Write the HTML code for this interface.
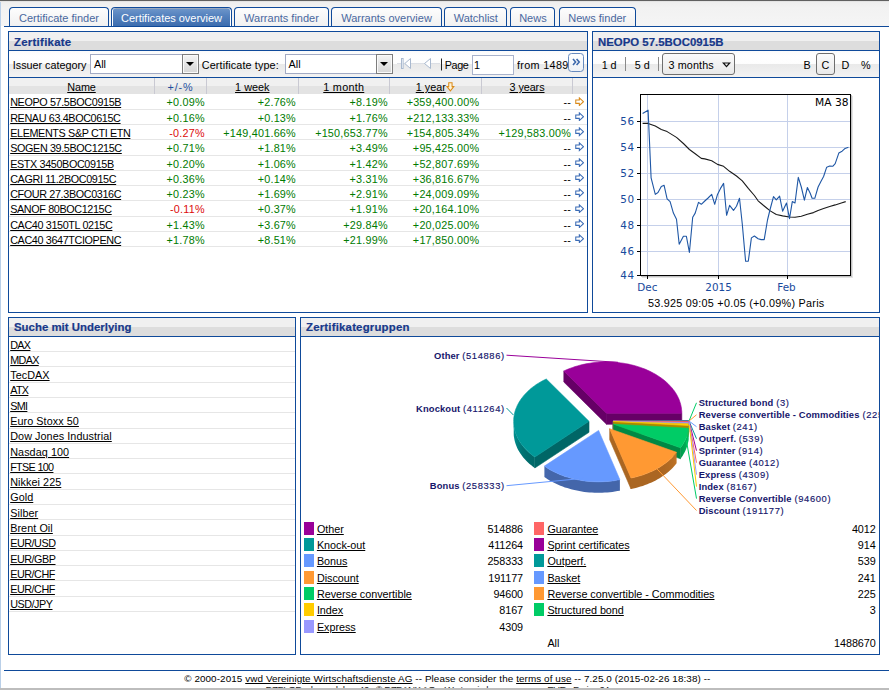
<!DOCTYPE html>
<html><head><meta charset="utf-8"><title>Certificates overview</title>
<style>
html,body{margin:0;padding:0;}
body{width:889px;height:690px;overflow:hidden;position:relative;background:#fff;font-family:"Liberation Sans",sans-serif;font-size:10.8px;color:#000;}
*{box-sizing:border-box;}
.abs{position:absolute;}
#topbg{position:absolute;left:0;top:0;width:889px;height:26px;background:linear-gradient(#606060 0,#606060 0.95px,#dadada 1px,#ededed 2px,#efefef 3px,#f2f2f2 8px,#f5f5f5 26px);}
#leftedge{position:absolute;left:0;top:2px;width:1px;height:688px;background:#b9cfe8;}
#tabline{position:absolute;left:4px;top:26px;width:885px;height:1px;background:#0f4a9a;}
.tab{position:absolute;top:7px;height:19px;border:1px solid #0f4a9a;border-bottom:none;border-radius:4px 4px 0 0;background:linear-gradient(#fdfdfd,#f1f1f1);color:#4a689f;font-size:11px;line-height:21px;text-align:center;white-space:nowrap;}
.tab.act{background:linear-gradient(#b0b4bb 0,#6a93c8 1.5px,#5683bf 40%,#3d6dae 100%);color:#fff;box-shadow:inset 1px 0 0 #fff, inset -1px 0 0 #fff;}
.panel{position:absolute;border:1px solid #0f4a9a;background:#fff;overflow:hidden;}
.ph{position:absolute;left:0;top:0;right:0;height:19px;border-bottom:1px solid #0f4a9a;background:linear-gradient(#f0f0f0 0,#f0f0f0 9px,#dddddd 9px,#dddddd 18px);color:#17388a;-webkit-text-stroke:0.2px #17388a;font-weight:bold;font-size:11.4px;line-height:20px;padding-left:5px;white-space:nowrap;}
a{color:#000;text-decoration:underline;}
.tb{position:absolute;left:0;right:0;top:19px;height:27px;border-bottom:1px solid #0f4a9a;background:linear-gradient(#fbfbfb 0,#fff 20%,#fdfdfd 48%,#e9e9e9 52%,#f3f3f3 100%);}
.lbl{position:absolute;white-space:nowrap;line-height:13px;}
.sel{position:absolute;border:1px solid #a3abc4;background:#fff;}
.sel span{position:absolute;left:3px;top:3px;line-height:13px;}
.ddb{position:absolute;right:-1px;top:-1px;bottom:-1px;width:16.8px;border:1px solid #7d7d7d;background:linear-gradient(#f4f4f4,#d6d6d6);box-shadow:inset 0 0 0 1px #fafafa;}
.ddb:after{content:"";position:absolute;left:3.1px;top:7px;border-left:4.3px solid transparent;border-right:4.3px solid transparent;border-top:4.4px solid #000;}
.th{position:absolute;left:0;right:0;top:46px;height:16px;background:linear-gradient(#f0f0f0 0,#f0f0f0 8.5px,#e3e3e3 8.5px,#e3e3e3 16px);}
.th div{position:absolute;top:0;height:16px;line-height:19px;text-align:center;white-space:nowrap;border-right:1px solid #c9c9d2;}
.row{position:absolute;left:0;right:0;border-bottom:1px solid #e6e6e6;white-space:nowrap;}
.row div{position:absolute;top:0;line-height:16.2px;}
.g{color:#007a00;}
.r{color:#dc0a0a;}
.num{text-align:right;}
.btn{position:absolute;border:1px solid #6e6e6e;border-radius:3px;background:linear-gradient(#fbfbfb,#e9e9e9);}
.sep{position:absolute;width:1px;background:#8a8a8a;}
.sw{position:absolute;width:10.1px;height:13.1px;}
.lg{position:absolute;white-space:nowrap;line-height:13px;}
</style></head><body>
<div id="topbg"></div><div id="leftedge"></div><div id="tabline"></div>
<div class="tab" style="left:9.0px;width:100.0px;"><span style="letter-spacing:-0.005px;">Certificate finder</span></div>
<div class="tab act" style="left:111.0px;width:121.0px;"><span style="letter-spacing:-0.022px;">Certificates overview</span></div>
<div class="tab" style="left:234.0px;width:95.0px;">Warrants finder</div>
<div class="tab" style="left:331.0px;width:111.0px;">Warrants overview</div>
<div class="tab" style="left:444.4px;width:62.8px;">Watchlist</div>
<div class="tab" style="left:510.4px;width:45.0px;">News</div>
<div class="tab" style="left:558.5px;width:77.5px;">News finder</div>
<div class="panel" id="p1" style="left:8px;top:31px;width:580px;height:282px;">
<div class="ph"><span style="letter-spacing:0.275px;">Zertifikate</span></div>
<div class="tb">
<div class="lbl" style="left:3.8px;top:7.5px;"><span style="letter-spacing:-0.015px;">Issuer category</span></div>
<div class="sel" style="left:81px;top:3px;width:108.6px;height:20px;"><span>All</span><div class="ddb"></div></div>
<div class="lbl" style="left:192.8px;top:7.5px;"><span style="letter-spacing:0.116px;">Certificate type:</span></div>
<div class="sel" style="left:275.6px;top:3px;width:108.4px;height:20px;"><span>All</span><div class="ddb"></div></div>
<svg class="abs" style="left:386px;top:2px" width="60" height="24" viewBox="0 0 60 24"><line x1="2" y1="10.5" x2="45" y2="10.5" stroke="#dcdfe5" stroke-width="1"/><g fill="#fff" stroke="#a9b9cf" stroke-width="1"><rect x="6.5" y="5.5" width="1.6" height="10" /><path d="M15.5 5.5 L9.8 10.5 L15.5 15.5 Z"/><path d="M35.5 5.5 L29.5 10.5 L35.5 15.5 Z"/></g><line x1="46.5" y1="5.5" x2="46.5" y2="17.5" stroke="#222" stroke-width="1"/></svg>
<div class="lbl" style="left:435.7px;top:7.5px;"><span style="letter-spacing:-0.355px;">Page</span></div>
<div class="sel" style="left:463px;top:4px;width:42px;height:19.5px;border-color:#a9b3cc;"><span style="left:1px">1</span></div>
<div class="lbl" style="left:508px;top:7.5px;width:50.6px;overflow:hidden;"><span style="letter-spacing:0.331px;">from 1489</span></div>
<div class="lbl" style="left:558.6px;top:7.5px;color:#c8c8c8;">1</div>
<div class="btn" style="left:558.7px;top:2.4px;width:16px;height:18.5px;border-color:#5d83bb;border-radius:3.5px;background:linear-gradient(#fff,#eef2f8);opacity:.93"><svg class="abs" style="left:3.5px;top:4px" width="9" height="8" viewBox="0 0 9 8"><path d="M1 1 L3.6 4 L1 7 M4.6 1 L7.2 4 L4.6 7" fill="none" stroke="#2f5fa8" stroke-width="1.6"/></svg></div>
</div>
<div class="th">
<div style="left:0.0px;width:146.0px;"><a style="letter-spacing:-0.077px;">Name</a></div>
<div style="left:146.0px;width:52.0px;"><span style="color:#1f4f9f"><span style="letter-spacing:0.873px;">+/-%</span></span></div>
<div style="left:198.0px;width:91.6px;"><a style="letter-spacing:0.047px;">1 week</a></div>
<div style="left:289.6px;width:91.4px;"><a style="letter-spacing:0.283px;">1 month</a></div>
<div style="left:381.0px;width:92.0px;"><a style="letter-spacing:-0.002px;margin-right:9.5px;">1 year</a></div>
<div style="left:473.0px;width:91.0px;"><a style="letter-spacing:-0.059px;">3 years</a></div>
<div style="left:564.0px;width:14.0px;border-right:none;"></div>
<svg class="abs" style="left:437.4px;top:4px" width="8.8" height="10.2" viewBox="0 0 9 11"><path d="M2.7 0.8 H6.3 V5 H8.2 L4.5 9.6 L0.8 5 H2.7 Z" fill="#fff3d6" stroke="#d98a1a" stroke-width="1.1"/></svg>
</div>
<div class="row" style="top:62.40px;height:15.28px;">
<div style="left:1.2px;letter-spacing:-0.370px"><a>NEOPO 57.5BOC0915B</a></div>
<div class="num g" style="right:382.5px;letter-spacing:0.220px;margin-right:-0.220px">+0.09%</div>
<div class="num g" style="right:291.3px;letter-spacing:0.220px;margin-right:-0.220px">+2.76%</div>
<div class="num g" style="right:199.5px;letter-spacing:0.220px;margin-right:-0.220px">+8.19%</div>
<div class="num g" style="right:108.0px;letter-spacing:0.220px;margin-right:-0.220px">+359,400.00%</div>
<div class="num " style="right:16.2px;letter-spacing:0.220px;margin-right:-0.220px">--</div>
<svg class="abs" style="left:566px;top:2.2px" width="9.4" height="9.4" viewBox="0 0 10 10"><path d="M0.8 3.2 H4.6 V0.9 L9 5 L4.6 9.1 V6.8 H0.8 Z" fill="#fff" stroke="#d98a1a" stroke-width="1.1"/></svg>
</div>
<div class="row" style="top:77.68px;height:15.28px;">
<div style="left:1.2px;letter-spacing:-0.370px"><a>RENAU 63.4BOC0615C</a></div>
<div class="num g" style="right:382.5px;letter-spacing:0.220px;margin-right:-0.220px">+0.16%</div>
<div class="num g" style="right:291.3px;letter-spacing:0.220px;margin-right:-0.220px">+0.13%</div>
<div class="num g" style="right:199.5px;letter-spacing:0.220px;margin-right:-0.220px">+1.76%</div>
<div class="num g" style="right:108.0px;letter-spacing:0.220px;margin-right:-0.220px">+212,133.33%</div>
<div class="num " style="right:16.2px;letter-spacing:0.220px;margin-right:-0.220px">--</div>
<svg class="abs" style="left:566px;top:2.2px" width="9.4" height="9.4" viewBox="0 0 10 10"><path d="M0.8 3.2 H4.6 V0.9 L9 5 L4.6 9.1 V6.8 H0.8 Z" fill="#fff" stroke="#3a6bb5" stroke-width="1.1"/></svg>
</div>
<div class="row" style="top:92.96px;height:15.28px;">
<div style="left:1.2px;letter-spacing:-0.370px"><a>ELEMENTS S&amp;P CTI ETN</a></div>
<div class="num r" style="right:382.5px;letter-spacing:0.220px;margin-right:-0.220px">-0.27%</div>
<div class="num g" style="right:291.3px;letter-spacing:0.220px;margin-right:-0.220px">+149,401.66%</div>
<div class="num g" style="right:199.5px;letter-spacing:0.220px;margin-right:-0.220px">+150,653.77%</div>
<div class="num g" style="right:108.0px;letter-spacing:0.220px;margin-right:-0.220px">+154,805.34%</div>
<div class="num g" style="right:16.2px;letter-spacing:0.220px;margin-right:-0.220px">+129,583.00%</div>
<svg class="abs" style="left:566px;top:2.2px" width="9.4" height="9.4" viewBox="0 0 10 10"><path d="M0.8 3.2 H4.6 V0.9 L9 5 L4.6 9.1 V6.8 H0.8 Z" fill="#fff" stroke="#3a6bb5" stroke-width="1.1"/></svg>
</div>
<div class="row" style="top:108.24px;height:15.28px;">
<div style="left:1.2px;letter-spacing:-0.370px"><a>SOGEN 39.5BOC1215C</a></div>
<div class="num g" style="right:382.5px;letter-spacing:0.220px;margin-right:-0.220px">+0.71%</div>
<div class="num g" style="right:291.3px;letter-spacing:0.220px;margin-right:-0.220px">+1.81%</div>
<div class="num g" style="right:199.5px;letter-spacing:0.220px;margin-right:-0.220px">+3.49%</div>
<div class="num g" style="right:108.0px;letter-spacing:0.220px;margin-right:-0.220px">+95,425.00%</div>
<div class="num " style="right:16.2px;letter-spacing:0.220px;margin-right:-0.220px">--</div>
<svg class="abs" style="left:566px;top:2.2px" width="9.4" height="9.4" viewBox="0 0 10 10"><path d="M0.8 3.2 H4.6 V0.9 L9 5 L4.6 9.1 V6.8 H0.8 Z" fill="#fff" stroke="#3a6bb5" stroke-width="1.1"/></svg>
</div>
<div class="row" style="top:123.52px;height:15.28px;">
<div style="left:1.2px;letter-spacing:-0.370px"><a>ESTX 3450BOC0915B</a></div>
<div class="num g" style="right:382.5px;letter-spacing:0.220px;margin-right:-0.220px">+0.20%</div>
<div class="num g" style="right:291.3px;letter-spacing:0.220px;margin-right:-0.220px">+1.06%</div>
<div class="num g" style="right:199.5px;letter-spacing:0.220px;margin-right:-0.220px">+1.42%</div>
<div class="num g" style="right:108.0px;letter-spacing:0.220px;margin-right:-0.220px">+52,807.69%</div>
<div class="num " style="right:16.2px;letter-spacing:0.220px;margin-right:-0.220px">--</div>
<svg class="abs" style="left:566px;top:2.2px" width="9.4" height="9.4" viewBox="0 0 10 10"><path d="M0.8 3.2 H4.6 V0.9 L9 5 L4.6 9.1 V6.8 H0.8 Z" fill="#fff" stroke="#3a6bb5" stroke-width="1.1"/></svg>
</div>
<div class="row" style="top:138.80px;height:15.28px;">
<div style="left:1.2px;letter-spacing:-0.370px"><a>CAGRI 11.2BOC0915C</a></div>
<div class="num g" style="right:382.5px;letter-spacing:0.220px;margin-right:-0.220px">+0.36%</div>
<div class="num g" style="right:291.3px;letter-spacing:0.220px;margin-right:-0.220px">+0.14%</div>
<div class="num g" style="right:199.5px;letter-spacing:0.220px;margin-right:-0.220px">+3.31%</div>
<div class="num g" style="right:108.0px;letter-spacing:0.220px;margin-right:-0.220px">+36,816.67%</div>
<div class="num " style="right:16.2px;letter-spacing:0.220px;margin-right:-0.220px">--</div>
<svg class="abs" style="left:566px;top:2.2px" width="9.4" height="9.4" viewBox="0 0 10 10"><path d="M0.8 3.2 H4.6 V0.9 L9 5 L4.6 9.1 V6.8 H0.8 Z" fill="#fff" stroke="#3a6bb5" stroke-width="1.1"/></svg>
</div>
<div class="row" style="top:154.08px;height:15.28px;">
<div style="left:1.2px;letter-spacing:-0.370px"><a>CFOUR 27.3BOC0316C</a></div>
<div class="num g" style="right:382.5px;letter-spacing:0.220px;margin-right:-0.220px">+0.23%</div>
<div class="num g" style="right:291.3px;letter-spacing:0.220px;margin-right:-0.220px">+1.69%</div>
<div class="num g" style="right:199.5px;letter-spacing:0.220px;margin-right:-0.220px">+2.91%</div>
<div class="num g" style="right:108.0px;letter-spacing:0.220px;margin-right:-0.220px">+24,009.09%</div>
<div class="num " style="right:16.2px;letter-spacing:0.220px;margin-right:-0.220px">--</div>
<svg class="abs" style="left:566px;top:2.2px" width="9.4" height="9.4" viewBox="0 0 10 10"><path d="M0.8 3.2 H4.6 V0.9 L9 5 L4.6 9.1 V6.8 H0.8 Z" fill="#fff" stroke="#3a6bb5" stroke-width="1.1"/></svg>
</div>
<div class="row" style="top:169.36px;height:15.28px;">
<div style="left:1.2px;letter-spacing:-0.370px"><a>SANOF 80BOC1215C</a></div>
<div class="num r" style="right:382.5px;letter-spacing:0.220px;margin-right:-0.220px">-0.11%</div>
<div class="num g" style="right:291.3px;letter-spacing:0.220px;margin-right:-0.220px">+0.37%</div>
<div class="num g" style="right:199.5px;letter-spacing:0.220px;margin-right:-0.220px">+1.91%</div>
<div class="num g" style="right:108.0px;letter-spacing:0.220px;margin-right:-0.220px">+20,164.10%</div>
<div class="num " style="right:16.2px;letter-spacing:0.220px;margin-right:-0.220px">--</div>
<svg class="abs" style="left:566px;top:2.2px" width="9.4" height="9.4" viewBox="0 0 10 10"><path d="M0.8 3.2 H4.6 V0.9 L9 5 L4.6 9.1 V6.8 H0.8 Z" fill="#fff" stroke="#3a6bb5" stroke-width="1.1"/></svg>
</div>
<div class="row" style="top:184.64px;height:15.28px;">
<div style="left:1.2px;letter-spacing:-0.370px"><a>CAC40 3150TL 0215C</a></div>
<div class="num g" style="right:382.5px;letter-spacing:0.220px;margin-right:-0.220px">+1.43%</div>
<div class="num g" style="right:291.3px;letter-spacing:0.220px;margin-right:-0.220px">+3.67%</div>
<div class="num g" style="right:199.5px;letter-spacing:0.220px;margin-right:-0.220px">+29.84%</div>
<div class="num g" style="right:108.0px;letter-spacing:0.220px;margin-right:-0.220px">+20,025.00%</div>
<div class="num " style="right:16.2px;letter-spacing:0.220px;margin-right:-0.220px">--</div>
<svg class="abs" style="left:566px;top:2.2px" width="9.4" height="9.4" viewBox="0 0 10 10"><path d="M0.8 3.2 H4.6 V0.9 L9 5 L4.6 9.1 V6.8 H0.8 Z" fill="#fff" stroke="#3a6bb5" stroke-width="1.1"/></svg>
</div>
<div class="row" style="top:199.92px;height:15.28px;">
<div style="left:1.2px;letter-spacing:-0.370px"><a>CAC40 3647TCIOPENC</a></div>
<div class="num g" style="right:382.5px;letter-spacing:0.220px;margin-right:-0.220px">+1.78%</div>
<div class="num g" style="right:291.3px;letter-spacing:0.220px;margin-right:-0.220px">+8.51%</div>
<div class="num g" style="right:199.5px;letter-spacing:0.220px;margin-right:-0.220px">+21.99%</div>
<div class="num g" style="right:108.0px;letter-spacing:0.220px;margin-right:-0.220px">+17,850.00%</div>
<div class="num " style="right:16.2px;letter-spacing:0.220px;margin-right:-0.220px">--</div>
<svg class="abs" style="left:566px;top:2.2px" width="9.4" height="9.4" viewBox="0 0 10 10"><path d="M0.8 3.2 H4.6 V0.9 L9 5 L4.6 9.1 V6.8 H0.8 Z" fill="#fff" stroke="#3a6bb5" stroke-width="1.1"/></svg>
</div>
</div>
<div class="panel" id="p2" style="left:592px;top:31px;width:288px;height:282px;">
<div class="ph"><span style="letter-spacing:0.008px;">NEOPO 57.5BOC0915B</span></div>
<div class="tb">
<div class="lbl" style="left:8.8px;top:7.5px;"><span style="letter-spacing:-0.204px;">1 d</span></div>
<div class="sep" style="left:32.0px;top:6px;height:14px;"></div>
<div class="lbl" style="left:41.7px;top:7.5px;"><span style="letter-spacing:0.063px;">5 d</span></div>
<div class="sep" style="left:65.0px;top:6px;height:14px;"></div>
<div class="btn" style="left:69.3px;top:2.4px;width:72.5px;height:21.2px;"></div>
<div class="lbl" style="left:75.4px;top:7.5px;"><span style="letter-spacing:0.122px;">3 months</span></div>
<svg class="abs" style="left:129.0px;top:10.5px" width="9" height="6" viewBox="0 0 9 6"><path d="M1.3 1 H7.7 L4.5 4.6 Z" fill="#eee" stroke="#111" stroke-width="1.2"/></svg>
<div class="lbl" style="left:210.6px;top:7.5px;">B</div>
<div class="btn" style="left:223.0px;top:2.4px;width:18.5px;height:21.2px;"></div>
<div class="lbl" style="left:228.5px;top:7.5px;">C</div>
<div class="lbl" style="left:248.6px;top:7.5px;">D</div>
<div class="lbl" style="left:268.0px;top:7.5px;">%</div>
</div>
<svg class="abs" style="left:0;top:46px" width="287" height="234" viewBox="0 0 287 234" font-family="'DejaVu Sans',sans-serif" font-size="10.4">
<rect x="49.0" y="18.0" width="211.0" height="182.0" fill="#e4e4e4"/>
<rect x="48.0" y="17.0" width="211.0" height="182.0" fill="#c2c2c2"/>
<rect x="47.0" y="16.0" width="211.0" height="182.0" fill="#fff"/>
<line x1="47.0" y1="43.5" x2="258.0" y2="43.5" stroke="#c5d0ea" stroke-width="1"/>
<line x1="47.0" y1="69.5" x2="258.0" y2="69.5" stroke="#c5d0ea" stroke-width="1"/>
<line x1="47.0" y1="95.5" x2="258.0" y2="95.5" stroke="#c5d0ea" stroke-width="1"/>
<line x1="47.0" y1="121.5" x2="258.0" y2="121.5" stroke="#c5d0ea" stroke-width="1"/>
<line x1="47.0" y1="147.5" x2="258.0" y2="147.5" stroke="#c5d0ea" stroke-width="1"/>
<line x1="47.0" y1="173.5" x2="258.0" y2="173.5" stroke="#c5d0ea" stroke-width="1"/>
<line x1="54.5" y1="16.0" x2="54.5" y2="198.0" stroke="#c5d0ea" stroke-width="1"/>
<line x1="54.5" y1="198.0" x2="54.5" y2="201.0" stroke="#000" stroke-width="1"/>
<line x1="125.5" y1="16.0" x2="125.5" y2="198.0" stroke="#c5d0ea" stroke-width="1"/>
<line x1="125.5" y1="198.0" x2="125.5" y2="201.0" stroke="#000" stroke-width="1"/>
<line x1="194.5" y1="16.0" x2="194.5" y2="198.0" stroke="#c5d0ea" stroke-width="1"/>
<line x1="194.5" y1="198.0" x2="194.5" y2="201.0" stroke="#000" stroke-width="1"/>
<polyline fill="none" stroke="#1a1a1a" stroke-width="1.1" stroke-linejoin="round" points="49.6,45.4 55.1,45.4 62.3,48.1 68.3,51.4 74.1,53.6 83.5,59.4 90.4,65.5 96.4,71.5 102.2,75.7 108.3,80.4 111.8,80.9 118.7,82.8 124.5,86.4 130.6,88.3 136.6,93.3 143.5,98.0 149.3,102.9 155.3,110.4 161.4,117.5 165.1,122.8 171.2,128.0 177.2,132.9 183.3,136.5 189.6,137.9 196.5,139.0 202.0,139.3 208.3,138.2 214.4,136.2 220.5,134.6 225.1,132.4 230.6,130.5 236.7,128.5 242.2,126.9 249.1,124.7 252.7,123.6"/>
<polyline fill="none" stroke="#1f57a5" stroke-width="1.1" stroke-linejoin="round" points="49.6,35.5 55.1,32.2 58.1,99.9 62.3,116.4 65.0,114.5 68.3,108.4 71.1,107.3 74.1,120.8 77.1,123.6 80.4,135.1 83.5,141.2 86.2,166.3 90.4,158.3 93.4,158.3 96.4,174.5 99.7,139.3 102.2,135.1 105.5,124.4 108.3,126.3 111.8,123.0 115.1,120.0 118.7,116.4 121.7,126.3 124.5,116.4 127.5,110.4 130.6,105.4 133.6,137.3 136.6,127.4 140.5,132.4 143.5,128.3 146.5,120.3 149.3,146.2 152.6,183.3 155.3,183.3 158.4,159.9 161.4,158.0 165.1,160.8 168.1,161.6 171.2,161.6 174.5,142.0 177.2,131.0 180.5,118.6 183.3,121.9 186.6,118.1 189.6,133.2 193.5,125.0 196.5,140.7 199.3,123.6 202.0,125.0 205.3,99.4 208.3,109.0 211.4,122.2 214.4,109.5 217.2,115.3 219.1,120.3 221.8,120.3 225.1,109.0 227.9,103.5 230.6,98.5 233.7,89.2 236.7,88.1 239.7,88.3 242.2,85.6 245.8,75.1 249.1,73.2 252.1,70.4 255.4,69.3"/>
<rect x="47.5" y="16.5" width="210.0" height="181.0" fill="none" stroke="#000" stroke-width="1"/>
<line x1="44.0" y1="43.5" x2="47.0" y2="43.5" stroke="#000" stroke-width="1"/>
<text x="41.6" y="46.6" text-anchor="end" fill="#184a9c" letter-spacing="0.6">56</text>
<line x1="44.0" y1="69.5" x2="47.0" y2="69.5" stroke="#000" stroke-width="1"/>
<text x="41.6" y="72.6" text-anchor="end" fill="#184a9c" letter-spacing="0.6">54</text>
<line x1="44.0" y1="95.5" x2="47.0" y2="95.5" stroke="#000" stroke-width="1"/>
<text x="41.6" y="98.6" text-anchor="end" fill="#184a9c" letter-spacing="0.6">52</text>
<line x1="44.0" y1="121.5" x2="47.0" y2="121.5" stroke="#000" stroke-width="1"/>
<text x="41.6" y="124.5" text-anchor="end" fill="#184a9c" letter-spacing="0.6">50</text>
<line x1="44.0" y1="147.5" x2="47.0" y2="147.5" stroke="#000" stroke-width="1"/>
<text x="41.6" y="150.5" text-anchor="end" fill="#184a9c" letter-spacing="0.6">48</text>
<line x1="44.0" y1="173.5" x2="47.0" y2="173.5" stroke="#000" stroke-width="1"/>
<text x="41.6" y="176.5" text-anchor="end" fill="#184a9c" letter-spacing="0.6">46</text>
<line x1="44.0" y1="197.5" x2="47.0" y2="197.5" stroke="#000" stroke-width="1"/>
<text x="41.6" y="200.7" text-anchor="end" fill="#184a9c" letter-spacing="0.6">44</text>
<text x="54.3" y="213.3" text-anchor="middle" fill="#184a9c">Dec</text>
<text x="125.6" y="213.3" text-anchor="middle" fill="#184a9c">2015</text>
<text x="193.5" y="213.3" text-anchor="middle" fill="#184a9c">Feb</text>
<text x="255.6" y="28.4" text-anchor="end" fill="#000" font-size="10.7">MA 38</text>
</svg>
<div class="lbl" style="left:55.0px;top:264.5px;"><span style="letter-spacing:0.254px;">53.925 09:05 +0.05 (+0.09%) Paris</span></div>
</div>
<div class="panel" id="p3" style="left:8px;top:317px;width:288px;height:338px;">
<div class="ph" style="line-height:18.6px"><span style="letter-spacing:0.016px;">Suche mit Underlying</span></div>
<div class="row" style="top:18.92px;height:15.28px;"><div style="left:1.2px;top:-0.3px;line-height:17px;letter-spacing:-0.670px"><a>DAX</a></div></div>
<div class="row" style="top:34.20px;height:15.28px;"><div style="left:1.2px;top:-0.3px;line-height:17px;letter-spacing:-0.670px"><a>MDAX</a></div></div>
<div class="row" style="top:49.48px;height:15.28px;"><div style="left:1.2px;top:-0.3px;line-height:17px;letter-spacing:0.068px"><a>TecDAX</a></div></div>
<div class="row" style="top:64.76px;height:15.28px;"><div style="left:1.2px;top:-0.3px;line-height:17px;letter-spacing:-0.670px"><a>ATX</a></div></div>
<div class="row" style="top:80.04px;height:15.28px;"><div style="left:1.2px;top:-0.3px;line-height:17px;letter-spacing:-0.670px"><a>SMI</a></div></div>
<div class="row" style="top:95.32px;height:15.28px;"><div style="left:1.2px;top:-0.3px;line-height:17px;letter-spacing:0.068px"><a>Euro Stoxx 50</a></div></div>
<div class="row" style="top:110.60px;height:15.28px;"><div style="left:1.2px;top:-0.3px;line-height:17px;letter-spacing:0.068px"><a>Dow Jones Industrial</a></div></div>
<div class="row" style="top:125.88px;height:15.28px;"><div style="left:1.2px;top:-0.3px;line-height:17px;letter-spacing:0.068px"><a>Nasdaq 100</a></div></div>
<div class="row" style="top:141.16px;height:15.28px;"><div style="left:1.2px;top:-0.3px;line-height:17px;letter-spacing:-0.670px"><a>FTSE 100</a></div></div>
<div class="row" style="top:156.44px;height:15.28px;"><div style="left:1.2px;top:-0.3px;line-height:17px;letter-spacing:0.068px"><a>Nikkei 225</a></div></div>
<div class="row" style="top:171.72px;height:15.28px;"><div style="left:1.2px;top:-0.3px;line-height:17px;letter-spacing:0.068px"><a>Gold</a></div></div>
<div class="row" style="top:187.00px;height:15.28px;"><div style="left:1.2px;top:-0.3px;line-height:17px;letter-spacing:0.068px"><a>Silber</a></div></div>
<div class="row" style="top:202.28px;height:15.28px;"><div style="left:1.2px;top:-0.3px;line-height:17px;letter-spacing:0.068px"><a>Brent Oil</a></div></div>
<div class="row" style="top:217.56px;height:15.28px;"><div style="left:1.2px;top:-0.3px;line-height:17px;letter-spacing:-0.470px"><a>EUR/USD</a></div></div>
<div class="row" style="top:232.84px;height:15.28px;"><div style="left:1.2px;top:-0.3px;line-height:17px;letter-spacing:-0.470px"><a>EUR/GBP</a></div></div>
<div class="row" style="top:248.12px;height:15.28px;"><div style="left:1.2px;top:-0.3px;line-height:17px;letter-spacing:-0.470px"><a>EUR/CHF</a></div></div>
<div class="row" style="top:263.40px;height:15.28px;"><div style="left:1.2px;top:-0.3px;line-height:17px;letter-spacing:-0.470px"><a>EUR/CHF</a></div></div>
<div class="row" style="top:278.68px;height:15.28px;"><div style="left:1.2px;top:-0.3px;line-height:17px;letter-spacing:-0.470px"><a>USD/JPY</a></div></div>
</div>
<div class="panel" id="p4" style="left:300px;top:317px;width:580px;height:338px;">
<div class="ph" style="line-height:18.6px"><span style="letter-spacing:0.202px;">Zertifikategruppen</span></div>
<svg class="abs" style="left:0;top:19px" width="579" height="190" viewBox="0 19 579 190" font-family="'Liberation Sans',sans-serif" font-size="9.6" font-weight="bold">
<polygon points="305.5,95.3 380.8,95.3 380.8,106.3 305.5,106.3" fill="#660066" stroke="#660066" stroke-width="0.6"/>
<polygon points="305.5,95.3 262.8,53.0 262.8,64.0 305.5,106.3" fill="#660066" stroke="#660066" stroke-width="0.6"/>
<polygon points="305.5,95.3 380.8,95.3 380.8,93.6 380.6,91.8 380.4,90.0 380.1,88.3 379.7,86.5 379.2,84.8 378.6,83.0 378.0,81.3 377.2,79.6 376.4,77.9 375.5,76.3 374.5,74.7 373.4,73.0 372.2,71.5 371.0,69.9 369.6,68.4 368.2,66.9 366.8,65.4 365.2,64.0 363.6,62.6 361.9,61.3 360.2,60.0 358.3,58.7 356.4,57.5 354.5,56.3 352.5,55.2 350.4,54.1 348.3,53.0 346.2,52.1 344.0,51.1 341.7,50.3 339.4,49.4 337.1,48.7 334.7,47.9 332.3,47.3 329.8,46.7 327.4,46.1 324.9,45.7 322.3,45.2 319.8,44.9 317.2,44.6 314.7,44.3 312.1,44.1 309.5,44.0 306.9,43.9 304.3,43.9 301.7,44.0 299.1,44.1 296.5,44.3 294.0,44.5 291.4,44.8 288.9,45.2 286.3,45.6 283.8,46.1 281.4,46.6 278.9,47.2 276.5,47.9 274.1,48.6 271.8,49.4 269.5,50.2 267.2,51.1 265.0,52.0 262.8,53.0" fill="#990099" stroke="#990099" stroke-width="0.6"/>
<polygon points="288.0,103.3 233.8,139.0 233.8,150.0 288.0,114.3" fill="#006666" stroke="#006666" stroke-width="0.6"/>
<linearGradient id="g2" gradientUnits="userSpaceOnUse" x1="212.7" y1="0" x2="233.8" y2="0"><stop offset="0.000" stop-color="#009292"/><stop offset="0.016" stop-color="#009090"/><stop offset="0.065" stop-color="#008b8b"/><stop offset="0.147" stop-color="#008383"/><stop offset="0.259" stop-color="#007b7b"/><stop offset="0.403" stop-color="#007373"/><stop offset="0.575" stop-color="#006e6e"/><stop offset="0.775" stop-color="#006a6a"/><stop offset="1.000" stop-color="#006868"/></linearGradient>
<polygon points="212.7,103.3 212.7,105.1 212.8,106.9 213.1,108.7 213.4,110.5 213.8,112.2 214.3,114.0 214.9,115.8 215.6,117.5 216.3,119.2 217.2,120.9 218.1,122.6 219.2,124.2 220.3,125.8 221.5,127.4 222.7,129.0 224.1,130.5 225.5,132.1 227.0,133.5 228.6,135.0 230.3,136.3 232.0,137.7 233.8,139.0 233.8,150.0 232.0,148.7 230.3,147.3 228.6,146.0 227.0,144.5 225.5,143.1 224.1,141.5 222.7,140.0 221.5,138.4 220.3,136.8 219.2,135.2 218.1,133.6 217.2,131.9 216.3,130.2 215.6,128.5 214.9,126.8 214.3,125.0 213.8,123.2 213.4,121.5 213.1,119.7 212.8,117.9 212.7,116.1 212.7,114.3" fill="url(#g2)"/>
<polygon points="288.0,103.3 245.3,61.0 243.2,62.0 241.1,63.1 239.1,64.2 237.1,65.4 235.2,66.6 233.4,67.9 231.6,69.2 229.9,70.6 228.3,72.0 226.7,73.4 225.3,74.9 223.8,76.4 222.5,77.9 221.3,79.5 220.1,81.1 219.0,82.7 218.0,84.3 217.1,86.0 216.2,87.7 215.5,89.4 214.8,91.1 214.2,92.9 213.7,94.6 213.4,96.4 213.0,98.2 212.8,99.9 212.7,101.7 212.7,103.5 212.7,105.3 212.9,107.1 213.1,108.9 213.4,110.6 213.8,112.4 214.3,114.1 214.9,115.9 215.6,117.6 216.4,119.3 217.2,121.0 218.2,122.7 219.2,124.3 220.3,125.9 221.5,127.5 222.8,129.1 224.1,130.6 225.6,132.1 227.1,133.6 228.6,135.0 230.3,136.4 232.0,137.7 233.8,139.0" fill="#009999" stroke="#009999" stroke-width="0.6"/>
<polygon points="312.3,103.0 387.6,103.0 387.6,114.0 312.3,114.0" fill="#008844" stroke="#008844" stroke-width="0.6"/>
<linearGradient id="g3" gradientUnits="userSpaceOnUse" x1="387.6" y1="0" x2="387.6" y2="0"><stop offset="0.000" stop-color="#00c361"/><stop offset="0.234" stop-color="#00c361"/><stop offset="0.438" stop-color="#00c361"/><stop offset="0.609" stop-color="#00c361"/><stop offset="0.750" stop-color="#00c361"/><stop offset="0.859" stop-color="#00c361"/><stop offset="0.938" stop-color="#00c361"/><stop offset="0.984" stop-color="#00c361"/><stop offset="1.000" stop-color="#00c361"/></linearGradient>
<polygon points="387.6,103.0 387.6,103.0 387.6,114.0 387.6,114.0" fill="url(#g3)"/>
<polygon points="312.3,103.0 387.6,103.0 387.6,103.0" fill="#00cc66" stroke="#00cc66" stroke-width="0.6"/>
<polygon points="312.3,103.0 387.6,103.1 387.6,114.1 312.3,114.0" fill="#aa6622" stroke="#aa6622" stroke-width="0.6"/>
<linearGradient id="g4" gradientUnits="userSpaceOnUse" x1="387.6" y1="0" x2="387.6" y2="0"><stop offset="0.000" stop-color="#f49230"/><stop offset="0.232" stop-color="#f49230"/><stop offset="0.433" stop-color="#f49230"/><stop offset="0.603" stop-color="#f49230"/><stop offset="0.744" stop-color="#f49230"/><stop offset="0.853" stop-color="#f49230"/><stop offset="0.933" stop-color="#f49230"/><stop offset="0.982" stop-color="#f49230"/><stop offset="1.000" stop-color="#f49230"/></linearGradient>
<polygon points="387.6,103.1 387.6,103.0 387.6,114.0 387.6,114.1" fill="url(#g4)"/>
<polygon points="312.3,103.0 387.6,103.1 387.6,103.0" fill="#ff9933" stroke="#ff9933" stroke-width="0.6"/>
<polygon points="312.3,103.0 387.6,103.1 387.6,114.1 312.3,114.0" fill="#4466aa" stroke="#4466aa" stroke-width="0.6"/>
<linearGradient id="g5" gradientUnits="userSpaceOnUse" x1="387.6" y1="0" x2="387.6" y2="0"><stop offset="0.000" stop-color="#6192f4"/><stop offset="0.163" stop-color="#6192f4"/><stop offset="0.315" stop-color="#6192f4"/><stop offset="0.456" stop-color="#6192f4"/><stop offset="0.586" stop-color="#6192f4"/><stop offset="0.706" stop-color="#6192f4"/><stop offset="0.815" stop-color="#6192f4"/><stop offset="0.913" stop-color="#6192f4"/><stop offset="1.000" stop-color="#6192f4"/></linearGradient>
<polygon points="387.6,103.1 387.6,103.1 387.6,114.1 387.6,114.1" fill="url(#g5)"/>
<polygon points="312.3,103.0 387.6,103.1 387.6,103.1" fill="#6699ff" stroke="#6699ff" stroke-width="0.6"/>
<polygon points="312.3,103.0 387.6,103.2 387.6,114.2 312.3,114.0" fill="#006666" stroke="#006666" stroke-width="0.6"/>
<linearGradient id="g6" gradientUnits="userSpaceOnUse" x1="387.6" y1="0" x2="387.6" y2="0"><stop offset="0.000" stop-color="#009292"/><stop offset="0.165" stop-color="#009292"/><stop offset="0.318" stop-color="#009292"/><stop offset="0.461" stop-color="#009292"/><stop offset="0.591" stop-color="#009292"/><stop offset="0.711" stop-color="#009292"/><stop offset="0.818" stop-color="#009292"/><stop offset="0.915" stop-color="#009292"/><stop offset="1.000" stop-color="#009292"/></linearGradient>
<polygon points="387.6,103.2 387.6,103.1 387.6,114.1 387.6,114.2" fill="url(#g6)"/>
<polygon points="312.3,103.0 387.6,103.2 387.6,103.1" fill="#009999" stroke="#009999" stroke-width="0.6"/>
<polygon points="312.3,103.1 387.6,103.5 387.6,114.5 312.3,114.1" fill="#660066" stroke="#660066" stroke-width="0.6"/>
<linearGradient id="g7" gradientUnits="userSpaceOnUse" x1="387.6" y1="0" x2="387.6" y2="0"><stop offset="0.000" stop-color="#920092"/><stop offset="0.159" stop-color="#920092"/><stop offset="0.308" stop-color="#920092"/><stop offset="0.448" stop-color="#920092"/><stop offset="0.578" stop-color="#920092"/><stop offset="0.698" stop-color="#920092"/><stop offset="0.808" stop-color="#920092"/><stop offset="0.909" stop-color="#920092"/><stop offset="1.000" stop-color="#920092"/></linearGradient>
<polygon points="387.6,103.5 387.6,103.3 387.6,114.3 387.6,114.5" fill="url(#g7)"/>
<polygon points="312.3,103.1 387.6,103.5 387.6,103.3" fill="#990099" stroke="#990099" stroke-width="0.6"/>
<polygon points="312.3,103.1 387.6,104.4 387.6,115.4 312.3,114.1" fill="#aa4444" stroke="#aa4444" stroke-width="0.6"/>
<linearGradient id="g8" gradientUnits="userSpaceOnUse" x1="387.6" y1="0" x2="387.6" y2="0"><stop offset="0.000" stop-color="#f46161"/><stop offset="0.181" stop-color="#f46161"/><stop offset="0.346" stop-color="#f46161"/><stop offset="0.495" stop-color="#f46161"/><stop offset="0.628" stop-color="#f46161"/><stop offset="0.745" stop-color="#f46161"/><stop offset="0.846" stop-color="#f46161"/><stop offset="0.931" stop-color="#f46161"/><stop offset="1.000" stop-color="#f46161"/></linearGradient>
<polygon points="387.6,104.4 387.6,103.6 387.6,114.6 387.6,115.4" fill="url(#g8)"/>
<polygon points="312.3,103.1 387.6,104.4 387.6,103.6" fill="#ff6666" stroke="#ff6666" stroke-width="0.6"/>
<polygon points="312.3,103.3 387.5,105.5 387.5,116.5 312.3,114.3" fill="#6666aa" stroke="#6666aa" stroke-width="0.6"/>
<linearGradient id="g9" gradientUnits="userSpaceOnUse" x1="387.5" y1="0" x2="387.6" y2="0"><stop offset="0.000" stop-color="#9292f4"/><stop offset="0.154" stop-color="#9292f4"/><stop offset="0.300" stop-color="#9292f4"/><stop offset="0.437" stop-color="#9292f4"/><stop offset="0.567" stop-color="#9292f4"/><stop offset="0.687" stop-color="#9292f4"/><stop offset="0.800" stop-color="#9292f4"/><stop offset="0.904" stop-color="#9292f4"/><stop offset="1.000" stop-color="#9292f4"/></linearGradient>
<polygon points="387.5,105.5 387.6,104.6 387.6,115.6 387.5,116.5" fill="url(#g9)"/>
<polygon points="312.3,103.3 387.5,105.5 387.6,104.6" fill="#9999ff" stroke="#9999ff" stroke-width="0.6"/>
<polygon points="312.3,103.5 387.3,107.5 387.3,118.5 312.3,114.5" fill="#aa8800" stroke="#aa8800" stroke-width="0.6"/>
<linearGradient id="g10" gradientUnits="userSpaceOnUse" x1="387.3" y1="0" x2="387.5" y2="0"><stop offset="0.000" stop-color="#f2c200"/><stop offset="0.156" stop-color="#f2c200"/><stop offset="0.303" stop-color="#f3c200"/><stop offset="0.442" stop-color="#f3c200"/><stop offset="0.571" stop-color="#f3c200"/><stop offset="0.692" stop-color="#f3c200"/><stop offset="0.803" stop-color="#f3c300"/><stop offset="0.906" stop-color="#f3c300"/><stop offset="1.000" stop-color="#f4c300"/></linearGradient>
<polygon points="387.3,107.5 387.5,105.7 387.5,116.7 387.3,118.5" fill="url(#g10)"/>
<polygon points="312.3,103.5 387.3,107.5 387.5,105.7" fill="#ffcc00" stroke="#ffcc00" stroke-width="0.6"/>
<polygon points="312.6,106.2 379.5,129.8 379.5,140.8 312.6,117.2" fill="#008844" stroke="#008844" stroke-width="0.6"/>
<linearGradient id="g11" gradientUnits="userSpaceOnUse" x1="379.5" y1="0" x2="387.7" y2="0"><stop offset="0.000" stop-color="#009a4d"/><stop offset="0.201" stop-color="#009f4f"/><stop offset="0.381" stop-color="#00a552"/><stop offset="0.539" stop-color="#00aa55"/><stop offset="0.676" stop-color="#00b058"/><stop offset="0.791" stop-color="#00b65b"/><stop offset="0.883" stop-color="#00bb5d"/><stop offset="0.953" stop-color="#00bf5f"/><stop offset="1.000" stop-color="#00c261"/></linearGradient>
<polygon points="379.5,129.8 380.6,128.2 381.7,126.7 382.6,125.1 383.5,123.5 384.3,121.9 385.0,120.2 385.7,118.6 386.2,116.9 386.7,115.3 387.1,113.6 387.5,111.9 387.7,110.2 387.7,121.2 387.5,122.9 387.1,124.6 386.7,126.3 386.2,127.9 385.7,129.6 385.0,131.2 384.3,132.9 383.5,134.5 382.6,136.1 381.7,137.7 380.6,139.2 379.5,140.8" fill="url(#g11)"/>
<polygon points="312.6,106.2 379.5,129.8 380.6,128.2 381.7,126.7 382.6,125.1 383.5,123.5 384.3,121.9 385.0,120.2 385.7,118.6 386.2,116.9 386.7,115.3 387.1,113.6 387.5,111.9 387.7,110.2" fill="#00cc66" stroke="#00cc66" stroke-width="0.6"/>
<polygon points="308.7,110.7 330.0,160.0 330.0,171.0 308.7,121.7" fill="#aa6622" stroke="#aa6622" stroke-width="0.6"/>
<linearGradient id="g12" gradientUnits="userSpaceOnUse" x1="330.0" y1="0" x2="375.6" y2="0"><stop offset="0.000" stop-color="#aa6622"/><stop offset="0.157" stop-color="#aa6622"/><stop offset="0.308" stop-color="#aa6622"/><stop offset="0.451" stop-color="#ab6622"/><stop offset="0.584" stop-color="#ab6622"/><stop offset="0.707" stop-color="#ad6722"/><stop offset="0.818" stop-color="#b06a23"/><stop offset="0.916" stop-color="#b76e24"/><stop offset="1.000" stop-color="#c17426"/></linearGradient>
<polygon points="330.0,160.0 332.4,159.5 334.8,158.9 337.2,158.3 339.5,157.6 341.8,156.9 344.0,156.1 346.3,155.2 348.4,154.3 350.6,153.4 352.6,152.4 354.7,151.4 356.6,150.3 358.6,149.2 360.4,148.0 362.2,146.8 364.0,145.6 365.7,144.3 367.3,143.0 368.9,141.6 370.3,140.2 371.8,138.8 373.1,137.3 374.4,135.8 375.6,134.3 375.6,145.3 374.4,146.8 373.1,148.3 371.8,149.8 370.3,151.2 368.9,152.6 367.3,154.0 365.7,155.3 364.0,156.6 362.2,157.8 360.4,159.0 358.6,160.2 356.6,161.3 354.7,162.4 352.6,163.4 350.6,164.4 348.4,165.3 346.3,166.2 344.0,167.1 341.8,167.9 339.5,168.6 337.2,169.3 334.8,169.9 332.4,170.5 330.0,171.0" fill="url(#g12)"/>
<polygon points="308.7,110.7 330.0,160.0 332.4,159.5 334.8,158.9 337.2,158.3 339.5,157.6 341.8,156.9 344.0,156.1 346.3,155.2 348.4,154.3 350.6,153.4 352.6,152.4 354.7,151.4 356.6,150.3 358.6,149.2 360.4,148.0 362.2,146.8 364.0,145.6 365.7,144.3 367.3,143.0 368.9,141.6 370.3,140.2 371.8,138.8 373.1,137.3 374.4,135.8 375.6,134.3" fill="#ff9933" stroke="#ff9933" stroke-width="0.6"/>
<linearGradient id="g13" gradientUnits="userSpaceOnUse" x1="243.4" y1="0" x2="318.9" y2="0"><stop offset="0.000" stop-color="#4568ad"/><stop offset="0.101" stop-color="#4466ab"/><stop offset="0.213" stop-color="#4466aa"/><stop offset="0.334" stop-color="#4466aa"/><stop offset="0.463" stop-color="#4466aa"/><stop offset="0.596" stop-color="#4466aa"/><stop offset="0.732" stop-color="#4466aa"/><stop offset="0.867" stop-color="#4466aa"/><stop offset="1.000" stop-color="#4466aa"/></linearGradient>
<polygon points="243.4,148.1 245.2,149.3 247.0,150.5 249.0,151.7 251.0,152.8 253.0,153.8 255.1,154.8 257.2,155.8 259.4,156.7 261.7,157.6 263.9,158.4 266.3,159.1 268.6,159.8 271.0,160.5 273.4,161.1 275.9,161.6 278.3,162.1 280.8,162.5 283.3,162.9 285.9,163.2 288.4,163.4 290.9,163.6 293.5,163.7 296.1,163.8 298.6,163.8 301.2,163.7 303.8,163.6 306.3,163.4 308.9,163.2 311.4,162.9 313.9,162.6 316.4,162.1 318.9,161.7 318.9,172.7 316.4,173.1 313.9,173.6 311.4,173.9 308.9,174.2 306.3,174.4 303.8,174.6 301.2,174.7 298.6,174.8 296.1,174.8 293.5,174.7 290.9,174.6 288.4,174.4 285.9,174.2 283.3,173.9 280.8,173.5 278.3,173.1 275.9,172.6 273.4,172.1 271.0,171.5 268.6,170.8 266.3,170.1 263.9,169.4 261.7,168.6 259.4,167.7 257.2,166.8 255.1,165.8 253.0,164.8 251.0,163.8 249.0,162.7 247.0,161.5 245.2,160.3 243.4,159.1" fill="url(#g13)"/>
<polygon points="297.6,112.4 243.4,148.1 245.2,149.3 247.0,150.5 249.0,151.7 251.0,152.8 253.0,153.8 255.1,154.8 257.2,155.8 259.4,156.7 261.7,157.6 263.9,158.4 266.3,159.1 268.6,159.8 271.0,160.5 273.4,161.1 275.9,161.6 278.3,162.1 280.8,162.5 283.3,162.9 285.9,163.2 288.4,163.4 290.9,163.6 293.5,163.7 296.1,163.8 298.6,163.8 301.2,163.7 303.8,163.6 306.3,163.4 308.9,163.2 311.4,162.9 313.9,162.6 316.4,162.1 318.9,161.7" fill="#6699ff" stroke="#6699ff" stroke-width="0.6"/>
<line x1="205.5" y1="37.2" x2="317.0" y2="44.3" stroke="#990099" stroke-width="1"/>
<line x1="205.5" y1="90.0" x2="212.4" y2="97.0" stroke="#009999" stroke-width="1"/>
<line x1="205.5" y1="167.7" x2="282.7" y2="160.3" stroke="#6699ff" stroke-width="1"/>
<line x1="388.0" y1="103.0" x2="395.5" y2="84.8" stroke="#00cc66" stroke-width="1"/>
<text x="397.7" y="88.2" fill="#16166b" font-size="9.4" letter-spacing="0.121">Structured bond</text>
<text x="475.2" y="88.2" fill="#16166b" font-size="9.4" font-weight="normal" stroke="#16166b" stroke-width="0.15" letter-spacing="0.615">(3)</text>
<line x1="388.0" y1="103.0" x2="395.5" y2="96.8" stroke="#ff9933" stroke-width="1"/>
<text x="397.7" y="100.2" fill="#16166b" font-size="9.4" letter-spacing="0.121">Reverse convertible - Commodities</text>
<text x="561.5" y="100.2" fill="#16166b" font-size="9.4" font-weight="normal" stroke="#16166b" stroke-width="0.15" letter-spacing="0.615">(225)</text>
<line x1="388.0" y1="103.0" x2="395.5" y2="108.7" stroke="#6699ff" stroke-width="1"/>
<text x="397.7" y="112.1" fill="#16166b" font-size="9.4" letter-spacing="0.121">Basket</text>
<text x="431.8" y="112.1" fill="#16166b" font-size="9.4" font-weight="normal" stroke="#16166b" stroke-width="0.15" letter-spacing="0.615">(241)</text>
<line x1="388.0" y1="103.0" x2="395.5" y2="120.7" stroke="#009999" stroke-width="1"/>
<text x="397.7" y="124.1" fill="#16166b" font-size="9.4" letter-spacing="0.121">Outperf.</text>
<text x="437.8" y="124.1" fill="#16166b" font-size="9.4" font-weight="normal" stroke="#16166b" stroke-width="0.15" letter-spacing="0.615">(539)</text>
<line x1="388.0" y1="103.0" x2="395.5" y2="132.7" stroke="#990099" stroke-width="1"/>
<text x="397.7" y="136.1" fill="#16166b" font-size="9.4" letter-spacing="0.121">Sprinter</text>
<text x="437.3" y="136.1" fill="#16166b" font-size="9.4" font-weight="normal" stroke="#16166b" stroke-width="0.15" letter-spacing="0.615">(914)</text>
<line x1="388.0" y1="103.0" x2="395.5" y2="144.7" stroke="#ff6666" stroke-width="1"/>
<text x="397.7" y="148.1" fill="#16166b" font-size="9.4" letter-spacing="0.121">Guarantee</text>
<text x="447.9" y="148.1" fill="#16166b" font-size="9.4" font-weight="normal" stroke="#16166b" stroke-width="0.15" letter-spacing="0.615">(4012)</text>
<line x1="388.0" y1="103.0" x2="395.5" y2="156.6" stroke="#9999ff" stroke-width="1"/>
<text x="397.7" y="160.0" fill="#16166b" font-size="9.4" letter-spacing="0.121">Express</text>
<text x="437.7" y="160.0" fill="#16166b" font-size="9.4" font-weight="normal" stroke="#16166b" stroke-width="0.15" letter-spacing="0.615">(4309)</text>
<line x1="388.3" y1="107.0" x2="395.5" y2="168.6" stroke="#ffcc00" stroke-width="1"/>
<text x="397.7" y="172.0" fill="#16166b" font-size="9.4" letter-spacing="0.121">Index</text>
<text x="425.4" y="172.0" fill="#16166b" font-size="9.4" font-weight="normal" stroke="#16166b" stroke-width="0.15" letter-spacing="0.615">(8167)</text>
<line x1="385.5" y1="123.0" x2="395.5" y2="180.6" stroke="#00cc66" stroke-width="1"/>
<text x="397.7" y="184.0" fill="#16166b" font-size="9.4" letter-spacing="0.121">Reverse Convertible</text>
<text x="493.5" y="184.0" fill="#16166b" font-size="9.4" font-weight="normal" stroke="#16166b" stroke-width="0.15" letter-spacing="0.615">(94600)</text>
<line x1="355.7" y1="150.6" x2="395.5" y2="192.5" stroke="#ff9933" stroke-width="1"/>
<text x="397.7" y="195.9" fill="#16166b" font-size="9.4" letter-spacing="0.121">Discount</text>
<text x="441.5" y="195.9" fill="#16166b" font-size="9.4" font-weight="normal" stroke="#16166b" stroke-width="0.15" letter-spacing="0.615">(191177)</text>
<text x="133.0" y="40.9" fill="#16166b" font-size="9.4" letter-spacing="0.121">Other</text>
<text x="161.3" y="40.9" fill="#16166b" font-size="9.4" font-weight="normal" stroke="#16166b" stroke-width="0.15" letter-spacing="0.615">(514886)</text>
<text x="115.1" y="93.9" fill="#16166b" font-size="9.4" letter-spacing="0.121">Knockout</text>
<text x="162.0" y="93.9" fill="#16166b" font-size="9.4" font-weight="normal" stroke="#16166b" stroke-width="0.15" letter-spacing="0.615">(411264)</text>
<text x="128.8" y="171.2" fill="#16166b" font-size="9.4" letter-spacing="0.121">Bonus</text>
<text x="161.3" y="171.2" fill="#16166b" font-size="9.4" font-weight="normal" stroke="#16166b" stroke-width="0.15" letter-spacing="0.615">(258333)</text>
</svg>
<div class="sw" style="left:2.9px;top:203.9px;background:#990099"></div>
<div class="lg" style="left:15.9px;top:204.9px;letter-spacing:-0.028px"><a>Other</a></div>
<div class="lg" style="right:355.9px;top:204.9px;letter-spacing:-0.072px;margin-right:0.072px">514886</div>
<div class="sw" style="left:2.9px;top:220.1px;background:#009999"></div>
<div class="lg" style="left:15.9px;top:221.1px;letter-spacing:-0.028px"><a>Knock-out</a></div>
<div class="lg" style="right:355.9px;top:221.1px;letter-spacing:-0.072px;margin-right:0.072px">411264</div>
<div class="sw" style="left:2.9px;top:236.3px;background:#6699ff"></div>
<div class="lg" style="left:15.9px;top:237.3px;letter-spacing:-0.028px"><a>Bonus</a></div>
<div class="lg" style="right:355.9px;top:237.3px;letter-spacing:-0.072px;margin-right:0.072px">258333</div>
<div class="sw" style="left:2.9px;top:252.8px;background:#ff9933"></div>
<div class="lg" style="left:15.9px;top:253.8px;letter-spacing:-0.028px"><a>Discount</a></div>
<div class="lg" style="right:355.9px;top:253.8px;letter-spacing:-0.072px;margin-right:0.072px">191177</div>
<div class="sw" style="left:2.9px;top:268.7px;background:#00cc66"></div>
<div class="lg" style="left:15.9px;top:269.7px;letter-spacing:-0.028px"><a>Reverse convertible</a></div>
<div class="lg" style="right:355.9px;top:269.7px;letter-spacing:-0.072px;margin-right:0.072px">94600</div>
<div class="sw" style="left:2.9px;top:284.9px;background:#ffcc00"></div>
<div class="lg" style="left:15.9px;top:285.9px;letter-spacing:-0.028px"><a>Index</a></div>
<div class="lg" style="right:355.9px;top:285.9px;letter-spacing:-0.072px;margin-right:0.072px">8167</div>
<div class="sw" style="left:2.9px;top:301.8px;background:#9999ff"></div>
<div class="lg" style="left:15.9px;top:302.8px;letter-spacing:-0.028px"><a>Express</a></div>
<div class="lg" style="right:355.9px;top:302.8px;letter-spacing:-0.072px;margin-right:0.072px">4309</div>
<div class="sw" style="left:233.2px;top:203.9px;background:#ff6666"></div>
<div class="lg" style="left:246.4px;top:204.9px;letter-spacing:-0.028px"><a>Guarantee</a></div>
<div class="lg" style="right:3.3px;top:204.9px;letter-spacing:-0.072px;margin-right:0.072px">4012</div>
<div class="sw" style="left:233.2px;top:220.1px;background:#990099"></div>
<div class="lg" style="left:246.4px;top:221.1px;letter-spacing:-0.028px"><a>Sprint certificates</a></div>
<div class="lg" style="right:3.3px;top:221.1px;letter-spacing:-0.072px;margin-right:0.072px">914</div>
<div class="sw" style="left:233.2px;top:236.3px;background:#009999"></div>
<div class="lg" style="left:246.4px;top:237.3px;letter-spacing:-0.028px"><a>Outperf.</a></div>
<div class="lg" style="right:3.3px;top:237.3px;letter-spacing:-0.072px;margin-right:0.072px">539</div>
<div class="sw" style="left:233.2px;top:252.8px;background:#6699ff"></div>
<div class="lg" style="left:246.4px;top:253.8px;letter-spacing:-0.028px"><a>Basket</a></div>
<div class="lg" style="right:3.3px;top:253.8px;letter-spacing:-0.072px;margin-right:0.072px">241</div>
<div class="sw" style="left:233.2px;top:268.7px;background:#ff9933"></div>
<div class="lg" style="left:246.4px;top:269.7px;letter-spacing:-0.028px"><a>Reverse convertible - Commodities</a></div>
<div class="lg" style="right:3.3px;top:269.7px;letter-spacing:-0.072px;margin-right:0.072px">225</div>
<div class="sw" style="left:233.2px;top:284.9px;background:#00cc66"></div>
<div class="lg" style="left:246.4px;top:285.9px;letter-spacing:-0.028px"><a>Structured bond</a></div>
<div class="lg" style="right:3.3px;top:285.9px;letter-spacing:-0.072px;margin-right:0.072px">3</div>
<div class="lg" style="left:246.4px;top:318.6px;">All</div>
<div class="lg" style="right:3.3px;top:318.6px;letter-spacing:-0.072px;margin-right:0.072px">1488670</div>
</div>
<div id="footline" class="abs" style="left:4px;top:670px;width:885px;height:1px;background:#0f4a9a;"></div>
<div id="foot1" class="abs" style="left:184.2px;top:671.6px;white-space:nowrap;line-height:13px;font-size:9.9px;letter-spacing:0.087px">© 2000-2015 <a>vwd Vereinigte Wirtschaftsdienste AG</a> -- Please consider the <a>terms of use</a> -- 7.25.0 (2015-02-26 18:38) --</div>
<div id="foot2" class="abs" style="left:265.5px;top:682.8px;white-space:nowrap;line-height:13px;font-size:9.9px;letter-spacing:-0.632px;color:#222">DZBLQP.xsl -- vwd.de -- 46 · © DZBANK AG -- Wertpapierkennnummer -- EUR · Paris · 64 ms</div>
<div id="botbar" class="abs" style="left:0;top:688px;width:889px;height:2px;background:#bdbdbd;"></div>
</body></html>
